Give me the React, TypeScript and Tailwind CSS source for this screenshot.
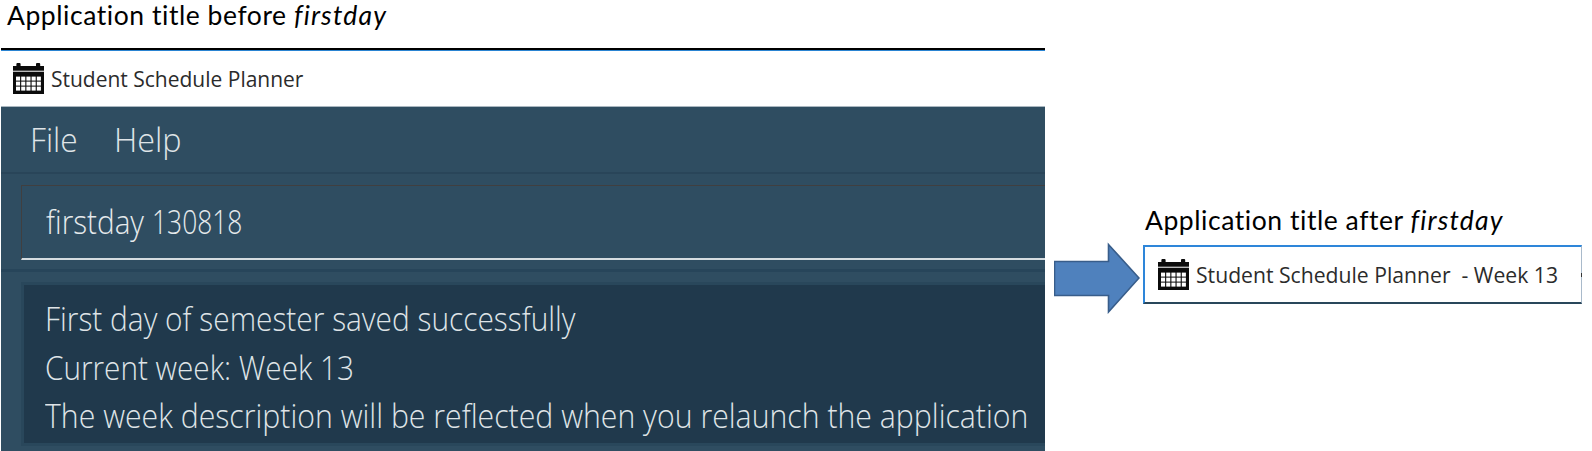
function CalendarIcon() {
  return (
    <svg width="31" height="31" viewBox="0 0 31 31" className="block shrink-0">
      <path d="M0 3h3.4V1q0-1 1-1h2.2q1 0 1 1v2h15.4V1q0-1 1-1h2.2q1 0 1 1v2H31v5H0z" fill="#0b0b0b" />
      <path d="M0 7.6h31v1.4H0z" fill="#b9b9b9" />
      <path d="M0 9h31v22H0z" fill="#0b0b0b" />
      <g fill="#fff">
        {[13.6, 18.6, 23.6].map((y) =>
          [3, 8.2, 13.4, 18.6, 23.8].map((x) => (
            <rect key={`${x}-${y}`} x={x} y={y} width="4.1" height="4" />
          )),
        )}
      </g>
    </svg>
  );
}

function Caption({ text }: { text: string }) {
  return (
    <h2 className="font-['Lato',sans-serif] text-[26.5px] leading-[31px] tracking-[0.55px] whitespace-pre text-black">
      {text} <em className="tracking-[1.2px]">firstday</em>
    </h2>
  );
}

export default function App() {
  return (
    <div className="flex h-[451px] w-[1592px] overflow-hidden bg-white font-['Open_Sans',sans-serif]">
      <section className="flex w-[1045px] shrink-0 flex-col">
        <div className="h-12 pl-[7px]">
          <Caption text="Application title before" />
        </div>
        <div className="ml-px flex h-[403px] flex-col bg-[#2f4d61]">
          <div className="h-0.5 bg-black" />
          <div className="h-px bg-[#2a84d2]" />
          <header className="flex h-[56px] items-center border-b border-[#aab7c0] bg-white pl-3 text-[22px] text-[#2b2b2b]">
            <CalendarIcon />
            <span className="ml-[7px] origin-left scale-x-[0.954] whitespace-pre">Student Schedule Planner</span>
          </header>
          <nav className="flex h-[67px] items-center gap-[34px] border-b-2 border-[#294559] pl-[29px] text-[33px] font-light text-[#dfe4e7]">
            <span className="origin-left scale-x-[0.96]">File</span>
            <span className="origin-left scale-x-[0.98]">Help</span>
          </nav>
          <div className="h-[98px] border-b-[3px] border-[#27455a] pt-[11px] pl-5">
            <div className="flex h-[75px] items-center border-t border-b-2 border-l border-t-[#403f40] border-b-[#d5dce0] border-l-[#403f40] pl-6 text-[33px] font-light text-[#e6eaec]">
              <span className="w-[106px] shrink-0">
                <span className="inline-block origin-left scale-x-[0.9]">firstday</span>
              </span>
              <span className="origin-left scale-x-[0.8]">130818</span>
            </div>
          </div>
          <div className="mt-[10px] ml-5 h-[164px] border-y-[3px] border-l-[3px] border-[#29475b] bg-[#20394c] pl-[21px] text-[33px] leading-[48.5px] font-light text-[#dfe4e7]">
            <p className="mt-2.5 origin-left scale-x-[0.905] whitespace-pre">First day of semester saved successfully</p>
            <p className="origin-left scale-x-[0.9] whitespace-pre">Current week: Week 13</p>
            <p className="origin-left scale-x-[0.916] whitespace-pre">The week description will be reflected when you relaunch the application</p>
          </div>
        </div>
      </section>
      <svg width="86" height="72" viewBox="0 0 86 72" className="mt-[242px] ml-[9px] block shrink-0">
        <path d="M.5 19.5H54.5V2.5L85 36 54.5 70V53.5H.5z" fill="#4f81bd" stroke="#385d8a" strokeWidth="1.6" />
      </svg>
      <section className="ml-[3px] w-[439px] pt-[205px]">
        <div className="h-10 pl-0.5">
          <Caption text="Application title after" />
        </div>
        <div className="relative flex h-[59px] items-center border-t-2 border-r border-b-2 border-l-2 border-t-[#2e86d9] border-r-[#a9bacb] border-b-[#29475b] border-l-[#2e86d9] pl-[13px] text-[22px] text-[#2b2b2b]">
          <CalendarIcon />
          <span className="ml-[7px] origin-left scale-x-[0.962] whitespace-pre">Student Schedule Planner  - Week 13</span>
          <i className="absolute top-[26px] -right-px h-1 w-px bg-[#333]" />
        </div>
      </section>
    </div>
  );
}
